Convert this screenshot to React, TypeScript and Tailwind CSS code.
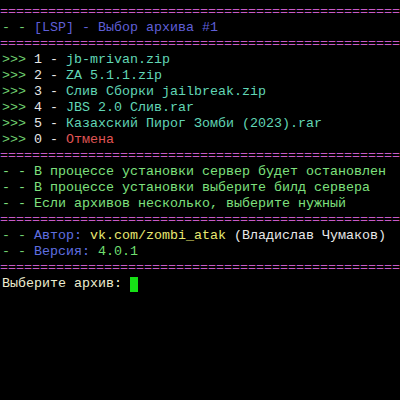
const SEP = "=".repeat(50);

function Sep() {
  return <div className="-ml-[2px] text-[#c75bc7]">{SEP}</div>;
}

const archives = [
  { n: "1", name: "jb-mrivan.zip" },
  { n: "2", name: "ZA 5.1.1.zip" },
  { n: "3", name: "Слив Сборки jailbreak.zip" },
  { n: "4", name: "JBS 2.0 Слив.rar" },
  { n: "5", name: "Казахский Пирог Зомби (2023).rar" },
];

const notes = [
  "В процессе установки сервер будет остановлен",
  "В процессе установки выберите билд сервера",
  "Если архивов несколько, выберите нужный",
];

export default function App() {
  return (
    <div
      className="w-[400px] h-[400px] bg-black overflow-hidden pt-1 pl-[2px] text-[13.33px] leading-4 whitespace-pre"
      style={{ fontFamily: '"Liberation Mono", "DejaVu Sans Mono", monospace' }}
    >
      <Sep />
      <div>
        <span className="text-[#6fcf6f]">- - </span>
        <span className="text-[#5f5fd7]">[LSP] - Выбор архива #1</span>
      </div>
      <Sep />
      {archives.map((a) => (
        <div key={a.n}>
          <span className="text-[#6fcf6f]">&gt;&gt;&gt; </span>
          <span className="text-[#e8e8e8]">{a.n} - </span>
          <span className="text-[#61d6b6]">{a.name}</span>
        </div>
      ))}
      <div>
        <span className="text-[#6fcf6f]">&gt;&gt;&gt; </span>
        <span className="text-[#e8e8e8]">0 - </span>
        <span className="text-[#e05555]">Отмена</span>
      </div>
      <Sep />
      {notes.map((t) => (
        <div key={t} className="text-[#7ee07e]">
          - - {t}
        </div>
      ))}
      <Sep />
      <div>
        <span className="text-[#6fcf6f]">- - </span>
        <span className="text-[#5f6fe0]">Автор: </span>
        <span className="text-[#e8e870]">vk.com/zombi_atak</span>
        <span className="text-[#e8e8e8]"> (Владислав Чумаков)</span>
      </div>
      <div>
        <span className="text-[#6fcf6f]">- - </span>
        <span className="text-[#5f6fe0]">Версия: </span>
        <span className="text-[#6fdf6f]">4.0.1</span>
      </div>
      <Sep />
      <div className="flex items-center">
        <span className="text-[#eeeed0]">Выберите архив: </span>
        <span className="inline-block w-2 h-[15px] bg-[#16e016]" />
      </div>
    </div>
  );
}
